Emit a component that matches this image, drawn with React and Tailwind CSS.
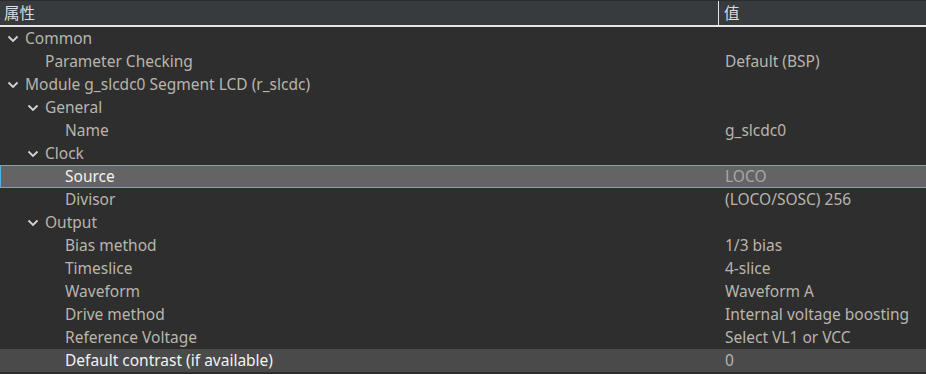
import React from "react";

const rows = [
  { label: "Common", level: 0, group: true },
  { label: "Parameter Checking", level: 1, value: "Default (BSP)" },
  { label: "Module g_slcdc0 Segment LCD (r_slcdc)", level: 0, group: true },
  { label: "General", level: 1, group: true },
  { label: "Name", level: 2, value: "g_slcdc0" },
  { label: "Clock", level: 1, group: true },
  { label: "Source", level: 2, value: "LOCO", selected: true },
  { label: "Divisor", level: 2, value: "(LOCO/SOSC) 256" },
  { label: "Output", level: 1, group: true },
  { label: "Bias method", level: 2, value: "1/3 bias" },
  { label: "Timeslice", level: 2, value: "4-slice" },
  { label: "Waveform", level: 2, value: "Waveform A" },
  { label: "Drive method", level: 2, value: "Internal voltage boosting" },
  { label: "Reference Voltage", level: 2, value: "Select VL1 or VCC" },
  { label: "Default contrast (if available)", level: 2, value: "0", hover: true },
];

const pad = ["pl-[25px]", "pl-[45px]", "pl-[65px]"];
const chevPos = ["left-[7px]", "left-[27px]", "left-[47px]"];

function Chevron({ level }) {
  return (
    <svg
      className={`absolute top-[8px] ${chevPos[level]}`}
      width="12"
      height="8"
      viewBox="0 0 12 8"
    >
      <path d="M1.5 1.5 L6 6 L10.5 1.5" fill="none" stroke="#d4d4d4" strokeWidth="1.8" />
    </svg>
  );
}

export default function App() {
  return (
    <div
      className="w-[926px] h-[374px] bg-[#2e2e2e] overflow-hidden text-[15.5px]"
      style={{ fontFamily: '"Noto Sans", "Noto Sans CJK SC", sans-serif' }}
    >
      <div className="flex h-[27px] bg-[#383b3e] border-b-2 border-[#e6e6e6] border-t border-t-[#2a2c2e] text-[#dcdcdc]">
        <div className="w-[719px] border-r border-[#e6e6e6] pl-[4px] leading-[24px]">属性</div>
        <div className="flex-1 pl-[5px] leading-[24px]">值</div>
      </div>
      {rows.map((r, i) => {
        const bg = r.selected
          ? "bg-[#646464] border-y border-l border-[#4fb3e8]"
          : r.hover
          ? "bg-[#4a4a4a]"
          : "";
        return (
          <div key={i} className={`relative flex h-[23px] items-center leading-[21px] ${bg}`}>
            {r.group && <Chevron level={r.level} />}
            <div
              className={`${r.selected ? "w-[724px] pl-[64px]" : `w-[725px] ${pad[r.level]}`} shrink-0 whitespace-nowrap ${
                r.selected || r.hover ? "text-[#f2f2f2]" : "text-[#b9b5ad]"
              }`}
            >
              {r.label}
            </div>
            <div
              className={`flex-1 whitespace-nowrap ${
                r.selected ? "text-[#a8a8a8]" : "text-[#b9b5ad]"
              }`}
            >
              {r.value}
            </div>
          </div>
        );
      })}
    </div>
  );
}
